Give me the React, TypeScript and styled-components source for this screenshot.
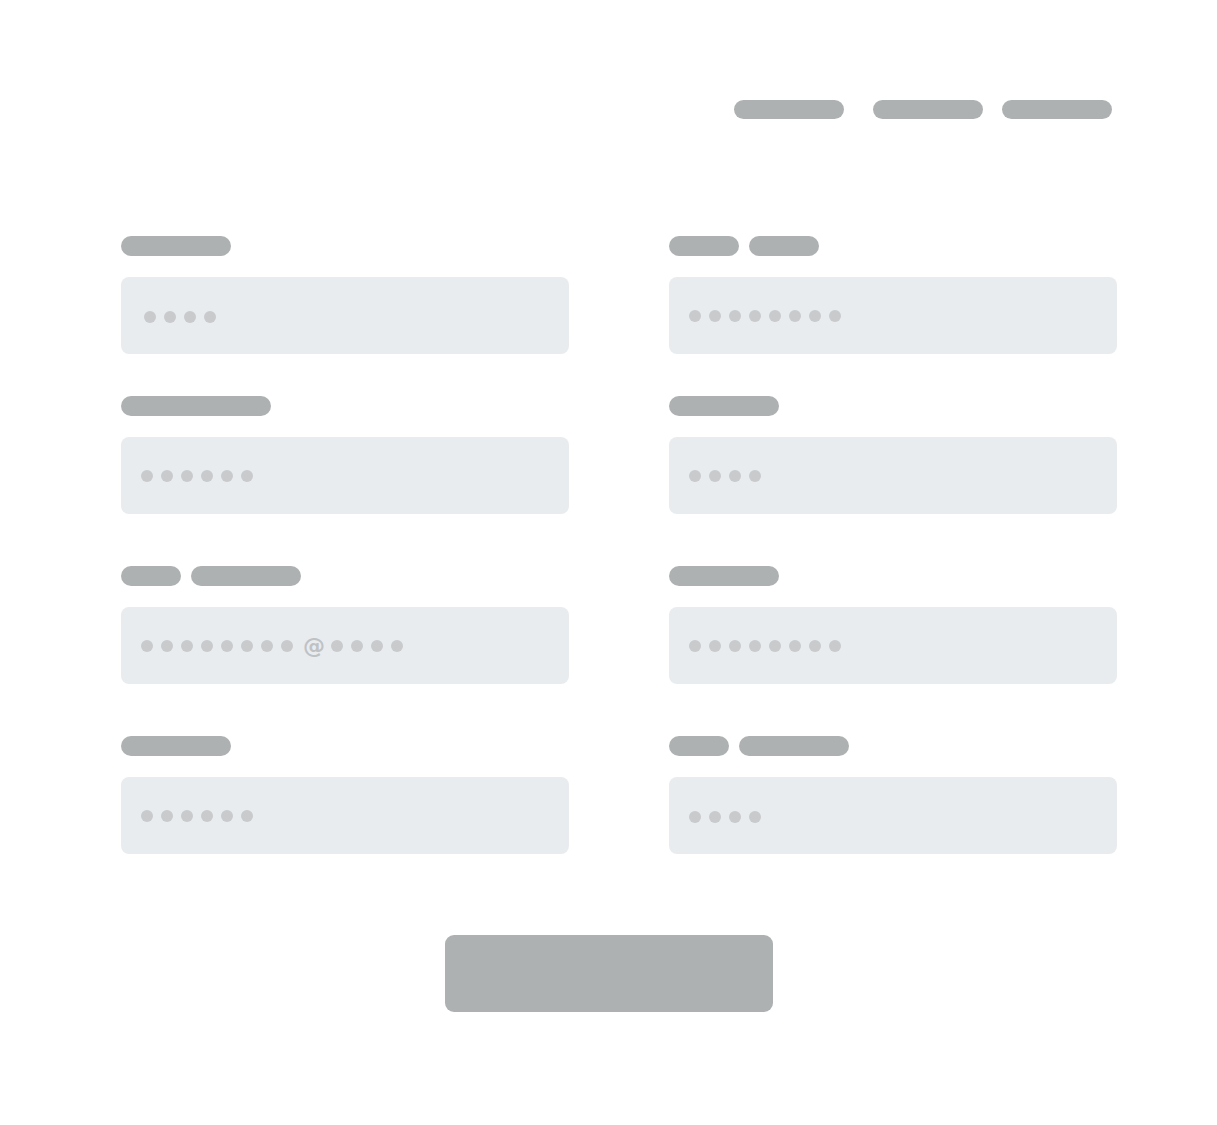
import * as React from "react";
import styled, { createGlobalStyle } from "styled-components";

const GlobalStyle = createGlobalStyle`
  html, body {
    margin: 0;
    padding: 0;
    background: #ffffff;
    font-family: "Liberation Sans", Arial, sans-serif;
  }
`;

const Page = styled.div`
  width: 1217px;
  min-height: 1125px;
  padding-top: 100px;
  box-sizing: border-box;
`;

const Nav = styled.nav`
  display: flex;
  justify-content: flex-end;
  padding-right: 105px;
`;

const NavItem = styled.div<{ $gap: number }>`
  width: 110px;
  height: 19px;
  border-radius: 10px;
  background: #aeb1b2;
  margin-left: ${(p) => p.$gap}px;
`;

const Form = styled.div`
  display: grid;
  grid-template-columns: 448px 448px;
  column-gap: 100px;
  padding-left: 121px;
  margin-top: 117px;
`;

const Field = styled.div<{ $top: number }>`
  display: flex;
  flex-direction: column;
  gap: 21px;
  margin-top: ${(p) => p.$top}px;
`;

const LabelRow = styled.div`
  display: flex;
  gap: 10px;
`;

const LabelBar = styled.div<{ $w: number }>`
  width: ${(p) => p.$w}px;
  height: 20px;
  border-radius: 10px;
  background: #aeb1b2;
`;

const InputBox = styled.div<{ $pad: number; $dy: number }>`
  height: 77px;
  border-radius: 8px;
  background: #e9ecef;
  display: flex;
  align-items: center;
  gap: 8px;
  padding-left: ${(p) => p.$pad}px;
  padding-top: ${(p) => p.$dy * 2}px;
  box-sizing: border-box;
`;

const Dot = styled.span`
  width: 12px;
  height: 12px;
  border-radius: 50%;
  background: #c8cacc;
  flex: none;
`;

const At = styled.span`
  width: 20px;
  text-align: center;
  font-family: "DejaVu Sans", "Liberation Sans", sans-serif;
  font-size: 22px;
  font-weight: bold;
  color: #bfc2c4;
  line-height: 12px;
  margin: 0 0 0 2px;
  flex: none;
`;

const Footer = styled.div`
  display: flex;
  justify-content: center;
  margin-top: 81px;
`;

const Submit = styled.div`
  width: 328px;
  height: 77px;
  border-radius: 9px;
  background: #aeb1b2;
`;

type FieldSpec = {
  labels: number[];
  dots: number;
  at?: number;
  pad: number;
  dy: number;
  top: number;
};

const fields: FieldSpec[] = [
  { labels: [110], dots: 4, pad: 23, dy: 1.5, top: 0 },
  { labels: [70, 70], dots: 8, pad: 20, dy: -0.5, top: 0 },
  { labels: [150], dots: 6, pad: 20, dy: -0.5, top: 42 },
  { labels: [110], dots: 4, pad: 20, dy: 0.5, top: 42 },
  { labels: [60, 110], dots: 12, at: 8, pad: 20, dy: -0.5, top: 52 },
  { labels: [110], dots: 8, pad: 20, dy: -0.5, top: 52 },
  { labels: [110], dots: 6, pad: 20, dy: 0.5, top: 52 },
  { labels: [60, 110], dots: 4, pad: 20, dy: 1.5, top: 52 },
];

const FormField: React.FC<{ spec: FieldSpec }> = ({ spec }) => (
  <Field $top={spec.top}>
    <LabelRow>
      {spec.labels.map((w, i) => (
        <LabelBar key={i} $w={w} />
      ))}
    </LabelRow>
    <InputBox $pad={spec.pad} $dy={spec.dy}>
      {Array.from({ length: spec.dots }).map((_, i) => (
        <React.Fragment key={i}>
          {spec.at === i && <At>@</At>}
          <Dot />
        </React.Fragment>
      ))}
    </InputBox>
  </Field>
);

const App: React.FC = () => {
  return (
    <>
      <GlobalStyle />
      <Page>
        <Nav>
          <NavItem $gap={0} />
          <NavItem $gap={29} />
          <NavItem $gap={19} />
        </Nav>
        <Form>
          {fields.map((f, i) => (
            <FormField key={i} spec={f} />
          ))}
        </Form>
        <Footer>
          <Submit />
        </Footer>
      </Page>
    </>
  );
};

export default App;
